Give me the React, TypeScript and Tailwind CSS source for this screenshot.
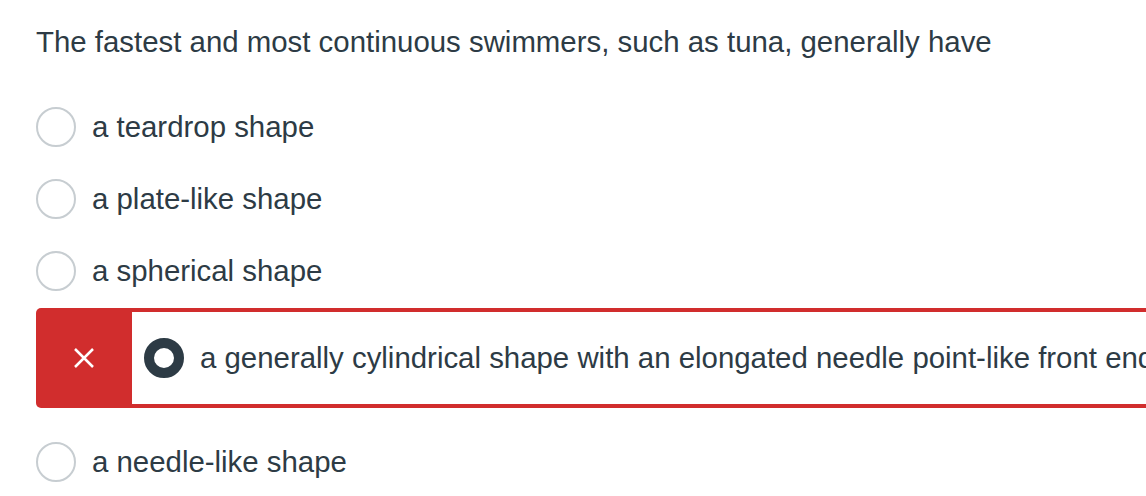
import React from "react";

const options = [
  { label: "a teardrop shape" },
  { label: "a plate-like shape" },
  { label: "a spherical shape" },
  { label: "a generally cylindrical shape with an elongated needle point-like front end", selected: true, wrong: true },
  { label: "a needle-like shape" },
];

const Radio = ({ checked }: { checked?: boolean }) =>
  checked ? (
    <span className="box-border w-10 h-10 shrink-0 rounded-full border-[10px] border-[#2d3b45] bg-white" />
  ) : (
    <span className="box-border w-10 h-10 shrink-0 rounded-full border-2 border-[#c7cdd1] bg-white" />
  );

export default function App() {
  return (
    <div className="w-[1146px] h-[496px] overflow-hidden bg-white text-[#2d3b45] font-['Liberation_Sans',Arial,sans-serif] text-[29.4px]">
      <div className="pl-9 pt-[22px]">
        <p className="leading-[40px] whitespace-nowrap">
          The fastest and most continuous swimmers, such as tuna, generally have
        </p>

        <div className="mt-[29px] flex flex-col">
          {options.map((opt) =>
            opt.selected ? (
              // wrong answer picked: red marker strip + red outline
              <div
                key={opt.label}
                className="mt-px mb-[18px] flex h-[100px] w-[1200px] rounded-l-[5px] bg-[#d12d2d] py-1"
              >
                <div className="flex w-24 shrink-0 items-center justify-center">
                  <svg width="22" height="22" viewBox="0 0 22 22" fill="none" stroke="white" strokeWidth="2.5">
                    <path d="M2 2 L20 20 M20 2 L2 20" />
                  </svg>
                </div>
                <div className="flex flex-1 items-center gap-4 bg-white pl-3">
                  <Radio checked />
                  <span className="whitespace-nowrap leading-[40px]">{opt.label}</span>
                </div>
              </div>
            ) : (
              <div key={opt.label} className="flex h-[72px] items-center gap-4">
                <Radio />
                <span className="whitespace-nowrap leading-[40px]">{opt.label}</span>
              </div>
            )
          )}
        </div>
      </div>
    </div>
  );
}
